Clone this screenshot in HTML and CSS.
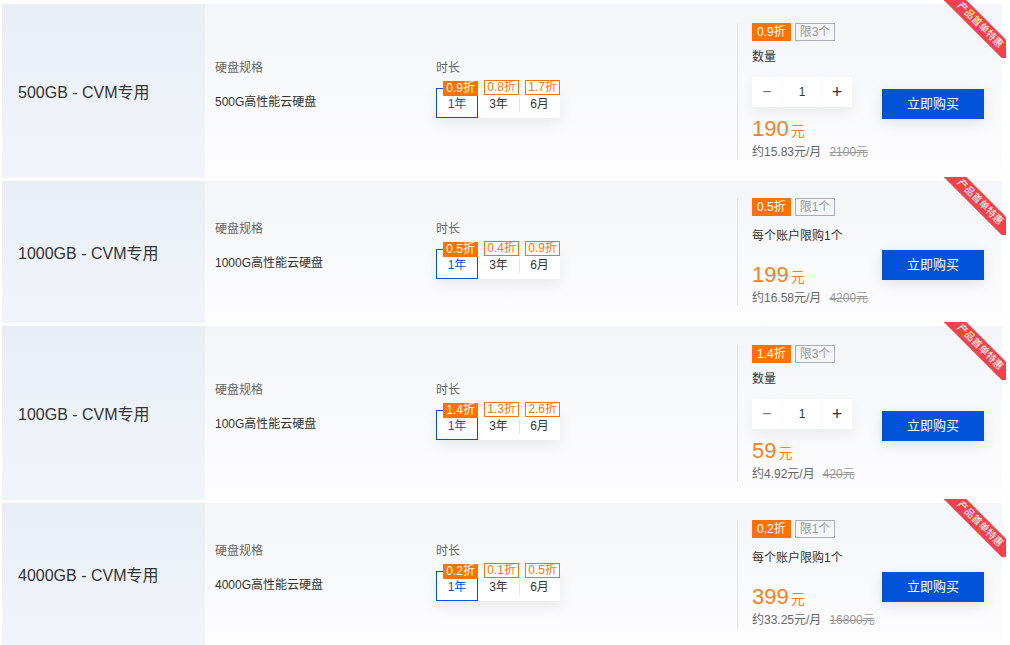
FILE: index.html
```html
<!DOCTYPE html>
<html lang="zh-CN">
<head>
    <meta charset="UTF-8">
    <title>云硬盘特惠</title>
    <link rel="stylesheet" href="styles.css">
</head>
<body>
    <div class="list">
        <div class="card card-qty">
            <div class="card-name">500GB - CVM专用</div>
            <div class="card-body">
                <div class="info">
                    <div class="col-spec">
                        <div class="label">硬盘规格</div>
                        <div class="value">500G高性能云硬盘</div>
                    </div>
                    <div class="col-time">
                        <div class="label">时长</div>
                        <div class="tabs">
                            <div class="tab active"><span class="off">0.9折</span>1年</div>
                            <div class="tab"><span class="off">0.8折</span>3年</div>
                            <div class="tab sep"><span class="off">1.7折</span>6月</div>
                        </div>
                    </div>
                </div>
                <div class="buy">
                    <div class="buy-info">
                        <div class="tags"><span class="tag-off">0.9折</span><span class="tag-limit">限3个</span></div>
                        <div class="qty-label">数量</div>
                        <div class="stepper">
                            <span class="step minus">−</span>
                            <span class="step num">1</span>
                            <span class="step plus">+</span>
                        </div>
                        <div class="price">190<small>元</small></div>
                        <div class="sub">约15.83元/月<del>2100元</del></div>
                    </div>
                    <a class="buy-btn" href="#">立即购买</a>
                </div>
            </div>
            <div class="ribbon-wrap"><div class="ribbon">产品首单特惠</div></div>
        </div>

        <div class="card card-limit">
            <div class="card-name">1000GB - CVM专用</div>
            <div class="card-body">
                <div class="info">
                    <div class="col-spec">
                        <div class="label">硬盘规格</div>
                        <div class="value">1000G高性能云硬盘</div>
                    </div>
                    <div class="col-time">
                        <div class="label">时长</div>
                        <div class="tabs">
                            <div class="tab active"><span class="off">0.5折</span>1年</div>
                            <div class="tab"><span class="off">0.4折</span>3年</div>
                            <div class="tab sep"><span class="off">0.9折</span>6月</div>
                        </div>
                    </div>
                </div>
                <div class="buy">
                    <div class="buy-info">
                        <div class="tags"><span class="tag-off">0.5折</span><span class="tag-limit">限1个</span></div>
                        <div class="note">每个账户限购1个</div>
                        <div class="price">199<small>元</small></div>
                        <div class="sub">约16.58元/月<del>4200元</del></div>
                    </div>
                    <a class="buy-btn" href="#">立即购买</a>
                </div>
            </div>
            <div class="ribbon-wrap"><div class="ribbon">产品首单特惠</div></div>
        </div>

        <div class="card card-qty">
            <div class="card-name">100GB - CVM专用</div>
            <div class="card-body">
                <div class="info">
                    <div class="col-spec">
                        <div class="label">硬盘规格</div>
                        <div class="value">100G高性能云硬盘</div>
                    </div>
                    <div class="col-time">
                        <div class="label">时长</div>
                        <div class="tabs">
                            <div class="tab active"><span class="off">1.4折</span>1年</div>
                            <div class="tab"><span class="off">1.3折</span>3年</div>
                            <div class="tab sep"><span class="off">2.6折</span>6月</div>
                        </div>
                    </div>
                </div>
                <div class="buy">
                    <div class="buy-info">
                        <div class="tags"><span class="tag-off">1.4折</span><span class="tag-limit">限3个</span></div>
                        <div class="qty-label">数量</div>
                        <div class="stepper">
                            <span class="step minus">−</span>
                            <span class="step num">1</span>
                            <span class="step plus">+</span>
                        </div>
                        <div class="price">59<small>元</small></div>
                        <div class="sub">约4.92元/月<del>420元</del></div>
                    </div>
                    <a class="buy-btn" href="#">立即购买</a>
                </div>
            </div>
            <div class="ribbon-wrap"><div class="ribbon">产品首单特惠</div></div>
        </div>

        <div class="card card-limit">
            <div class="card-name">4000GB - CVM专用</div>
            <div class="card-body">
                <div class="info">
                    <div class="col-spec">
                        <div class="label">硬盘规格</div>
                        <div class="value">4000G高性能云硬盘</div>
                    </div>
                    <div class="col-time">
                        <div class="label">时长</div>
                        <div class="tabs">
                            <div class="tab active"><span class="off">0.2折</span>1年</div>
                            <div class="tab"><span class="off">0.1折</span>3年</div>
                            <div class="tab sep"><span class="off">0.5折</span>6月</div>
                        </div>
                    </div>
                </div>
                <div class="buy">
                    <div class="buy-info">
                        <div class="tags"><span class="tag-off">0.2折</span><span class="tag-limit">限1个</span></div>
                        <div class="note">每个账户限购1个</div>
                        <div class="price">399<small>元</small></div>
                        <div class="sub">约33.25元/月<del>16800元</del></div>
                    </div>
                    <a class="buy-btn" href="#">立即购买</a>
                </div>
            </div>
            <div class="ribbon-wrap"><div class="ribbon">产品首单特惠</div></div>
        </div>
    </div>
</body>
</html>
```

FILE: styles.css
```css
* {
    margin: 0;
    padding: 0;
    box-sizing: border-box;
}

body {
    font-family: 'Liberation Sans', 'Noto Sans CJK SC', Arial, sans-serif;
    background: #fff;
    color: #333;
    font-size: 12px;
}

.list {
    width: 1002px;
    padding: 4px 0 0 2px;
    display: flex;
    flex-direction: column;
    gap: 3px;
}

.card {
    position: relative;
    display: flex;
    background: linear-gradient(180deg, #f3f5f8 0%, #fdfdfe 100%);
}

.card-qty { height: 174px; }
.card-limit { height: 142px; }

.card-name {
    width: 203px;
    flex-shrink: 0;
    display: flex;
    align-items: center;
    padding-left: 16px;
    font-size: 16px;
    color: #333;
    background: linear-gradient(180deg, #e9eef6 0%, #f1f4fa 100%);
}

.card-body {
    flex: 1;
    display: flex;
    padding: 0 18px 0 10px;
}

.info {
    display: flex;
    align-items: flex-start;
    align-self: center;
    padding-bottom: 5px;
}

.label {
    line-height: 18px;
    color: #666;
}

.col-spec {
    width: 221px;
}

.col-spec .value {
    margin-top: 16px;
    line-height: 18px;
    color: #333;
}

.col-time {
    width: 301px;
}

.tabs {
    display: flex;
    width: 124px;
    margin-top: 11px;
    background: #fff;
    box-shadow: 0 6px 14px rgba(0, 0, 0, 0.07);
}

.tab {
    position: relative;
    width: 41px;
    height: 30px;
    padding-top: 7px;
    text-align: center;
    line-height: 18px;
    color: #333;
}

.tab:first-child { width: 42px; }

.tab.active {
    border: 1px solid #0052d9;
    color: #0052d9;
    padding-top: 6px;
}

.tab.sep::before {
    content: '';
    position: absolute;
    left: 0;
    top: 9px;
    height: 15px;
    border-left: 1px solid #e3e3e3;
}

.tab .off {
    position: absolute;
    top: -8px;
    right: 0;
    height: 15px;
    padding: 0 2px;
    line-height: 13px;
    font-size: 12px;
    color: #ff7200;
    border: 1px solid #ff7200;
    background: #fff;
}

.tab.active .off {
    top: -8px;
    right: -1px;
    background: #ff7200;
    color: #fff;
}

.buy {
    flex: 1;
    display: flex;
}

.buy-info {
    width: 145px;
    align-self: center;
    border-left: 1px solid #e3e5e8;
    padding-left: 14px;
}

.tags {
    display: flex;
    gap: 4px;
    height: 18px;
}

.tag-off,
.tag-limit {
    height: 18px;
    line-height: 16px;
    padding: 0 4px;
    font-size: 12px;
}

.tag-off {
    background: #ff7200;
    color: #fff;
    border: 1px solid #ff7200;
}

.tag-limit {
    border: 1px solid #a9adb4;
    color: #999;
}

.qty-label {
    margin-top: 7px;
    line-height: 18px;
}

.note {
    margin-top: 11px;
    line-height: 18px;
}

.stepper {
    display: flex;
    gap: 1px;
    width: 100px;
    margin-top: 11px;
    box-shadow: 0 6px 14px rgba(0, 0, 0, 0.06);
}

.step {
    height: 30px;
    line-height: 30px;
    text-align: center;
    background: #fff;
}

.step.minus { width: 30px; color: #777; font-size: 16px; }
.step.num { width: 38px; color: #2b3b3b; }
.step.plus { width: 30px; color: #333; font-size: 18px; }

.price {
    margin-top: 9px;
    line-height: 26px;
    font-size: 22px;
    color: #f7801f;
}

.card-limit .price {
    margin-top: 17px;
}

.price small {
    font-size: 14px;
    margin-left: 2px;
}

.sub {
    line-height: 16px;
    color: #666;
    white-space: nowrap;
}

.sub del {
    margin-left: 8px;
    color: #999;
}

.buy-btn {
    align-self: center;
    margin-top: 26px;
    width: 102px;
    height: 30px;
    line-height: 30px;
    text-align: center;
    font-size: 13px;
    color: #fff;
    text-decoration: none;
    background: #0052d9;
    box-shadow: 0 4px 14px rgba(0, 0, 0, 0.1);
}

.ribbon-wrap {
    position: absolute;
    top: -4px;
    right: -4px;
    width: 62px;
    height: 58px;
    overflow: hidden;
}

.ribbon {
    position: absolute;
    left: -9px;
    top: 17px;
    width: 90px;
    height: 16px;
    line-height: 16px;
    text-align: center;
    font-size: 10px;
    color: #fff;
    background: #f0424c;
    transform: rotate(45deg);
}
```
